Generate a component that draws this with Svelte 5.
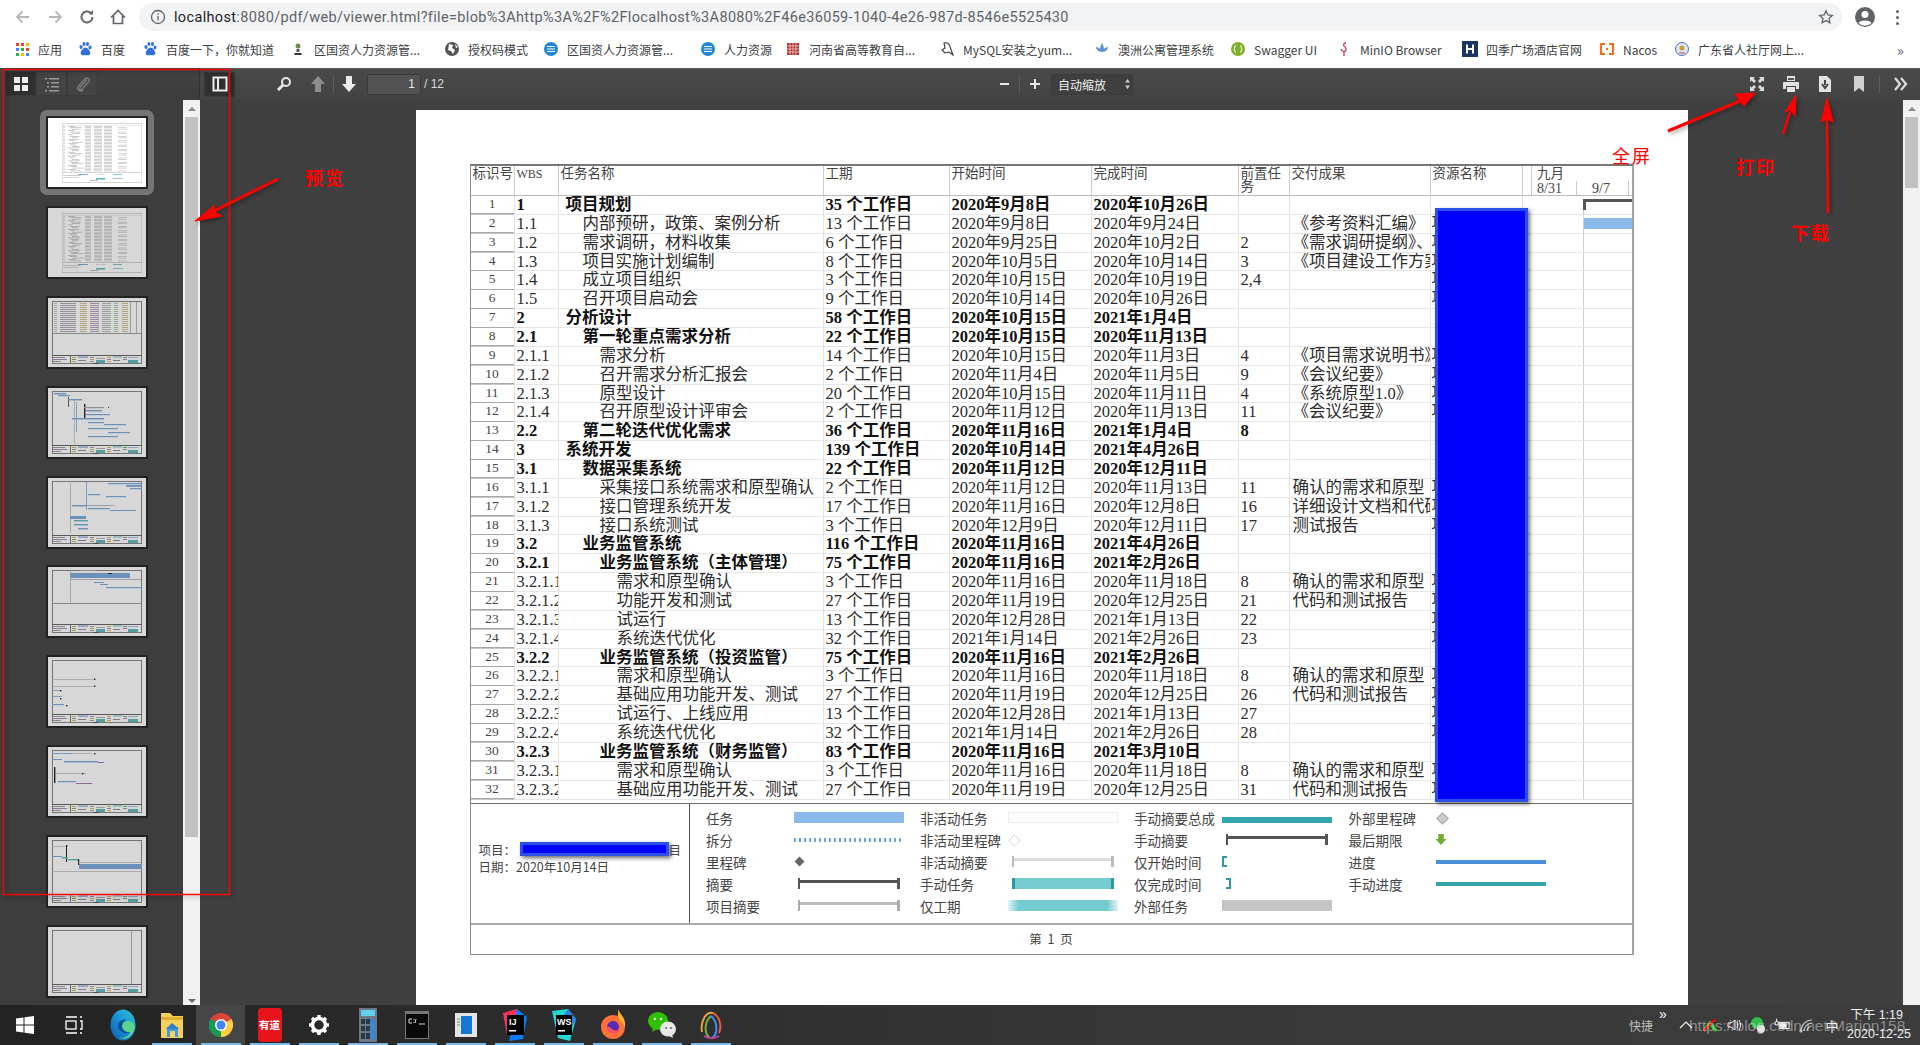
<script>
  const bookmarks = [
    ['apps','应用',63],['paw','百度',65],['paw','百度一下\uFF0C你就知道',148],['plant','区国资人力资源管...',154],
    ['globe','授权码模式',99],['ie','区国资人力资源管...',157],['ie','人力资源',85],['red','河南省高等教育自...',154],
    ['bird','MySQL安装之yum...',155],['leaf','澳洲公寓管理系统',136],['sw','Swagger UI',106],['fl','MinIO Browser',126],
    ['h','四季广场酒店官网',137],['na','Nacos',75],['gd','广东省人社厅网上...',130]
  ];
  const D = '个工作日';
  const rows = [
    [1,'1',1,'项目规划','35','2020年9月8日','2020年10月26日','','',''],
    [2,'1.1',2,'内部预研\uFF0C政策、案例分析','13','2020年9月8日','2020年9月24日','','《参考资料汇编》','项'],
    [3,'1.2',2,'需求调研\uFF0C材料收集','6','2020年9月25日','2020年10月2日','2','《需求调研提纲》、','项'],
    [4,'1.3',2,'项目实施计划编制','8','2020年10月5日','2020年10月14日','3','《项目建设工作方案','项'],
    [5,'1.4',2,'成立项目组织','3','2020年10月15日','2020年10月19日','2,4','','项'],
    [6,'1.5',2,'召开项目启动会','9','2020年10月14日','2020年10月26日','','','项'],
    [7,'2',1,'分析设计','58','2020年10月15日','2021年1月4日','','',''],
    [8,'2.1',2,'第一轮重点需求分析','22','2020年10月15日','2020年11月13日','','',''],
    [9,'2.1.1',3,'需求分析','14','2020年10月15日','2020年11月3日','4','《项目需求说明书》','项'],
    [10,'2.1.2',3,'召开需求分析汇报会','2','2020年11月4日','2020年11月5日','9','《会议纪要》','项'],
    [11,'2.1.3',3,'原型设计','20','2020年10月15日','2020年11月11日','4','《系统原型1.0》','项'],
    [12,'2.1.4',3,'召开原型设计评审会','2','2020年11月12日','2020年11月13日','11','《会议纪要》','项'],
    [13,'2.2',2,'第二轮迭代优化需求','36','2020年11月16日','2021年1月4日','8','',''],
    [14,'3',1,'系统开发','139','2020年10月14日','2021年4月26日','','',''],
    [15,'3.1',2,'数据采集系统','22','2020年11月12日','2020年12月11日','','',''],
    [16,'3.1.1',3,'采集接口系统需求和原型确认','2','2020年11月12日','2020年11月13日','11','确认的需求和原型','项'],
    [17,'3.1.2',3,'接口管理系统开发','17','2020年11月16日','2020年12月8日','16','详细设计文档和代码','项'],
    [18,'3.1.3',3,'接口系统测试','3','2020年12月9日','2020年12月11日','17','测试报告','项'],
    [19,'3.2',2,'业务监管系统','116','2020年11月16日','2021年4月26日','','',''],
    [20,'3.2.1',3,'业务监管系统\uFF08主体管理\uFF09','75','2020年11月16日','2021年2月26日','','',''],
    [21,'3.2.1.1',4,'需求和原型确认','3','2020年11月16日','2020年11月18日','8','确认的需求和原型','项'],
    [22,'3.2.1.2',4,'功能开发和测试','27','2020年11月19日','2020年12月25日','21','代码和测试报告','项'],
    [23,'3.2.1.3',4,'试运行','13','2020年12月28日','2021年1月13日','22','','项'],
    [24,'3.2.1.4',4,'系统迭代优化','32','2021年1月14日','2021年2月26日','23','','项'],
    [25,'3.2.2',3,'业务监管系统\uFF08投资监管\uFF09','75','2020年11月16日','2021年2月26日','','',''],
    [26,'3.2.2.1',4,'需求和原型确认','3','2020年11月16日','2020年11月18日','8','确认的需求和原型','项'],
    [27,'3.2.2.2',4,'基础应用功能开发、测试','27','2020年11月19日','2020年12月25日','26','代码和测试报告','项'],
    [28,'3.2.2.3',4,'试运行、上线应用','13','2020年12月28日','2021年1月13日','27','','项'],
    [29,'3.2.2.4',4,'系统迭代优化','32','2021年1月14日','2021年2月26日','28','','项'],
    [30,'3.2.3',3,'业务监管系统\uFF08财务监管\uFF09','83','2020年11月16日','2021年3月10日','','',''],
    [31,'3.2.3.1',4,'需求和原型确认','3','2020年11月16日','2020年11月18日','8','确认的需求和原型','项'],
    [32,'3.2.3.2',4,'基础应用功能开发、测试','27','2020年11月19日','2020年12月25日','31','代码和测试报告','项']
  ];
  const boldRows = new Set([1,7,8,13,14,15,19,20,25,30]);
  const legend = [
    ['任务','task'],['非活动任务','itask'],['手动摘要总成','mroll'],['外部里程碑','xmile'],
    ['拆分','split'],['非活动里程碑','imile'],['手动摘要','msum'],['最后期限','dead'],
    ['里程碑','mile'],['非活动摘要','isum'],['仅开始时间','sonly'],['进度','prog'],
    ['摘要','sum'],['手动任务','mtask'],['仅完成时间','fonly'],['手动进度','mprog'],
    ['项目摘要','psum'],['仅工期','donly'],['外部任务','xtask'],['','']
  ];

  const B = '#7ba9dc', K = '#222', G = '#aaa', T = '#5fb8bd', V = '#8a5aa0';
  function frame() {
    return [
      [4,3,90,1,'#888'],[4,3,1,63,'#888'],[93,3,1,63,'#888'],[4,57,90,1,'#666'],[4,65,90,1,'#888'],
      [5,59,12,.7,'#777'],[5,61,14,.7,V],[5,63,8,.7,'#777'],[22,57,1,8,'#777'],
      [24,59,4,.7,'#c90'],[24,61,4,.7,'#484'],[24,63,4,.7,'#c90'],[30,58.5,10,1.2,B],[30,62,8,.8,'#777'],
      [42,59,4,.7,V],[42,61,4,.7,'#c90'],[42,63,4,.7,'#777'],[48,62,9,3,T],[48,60,9,.7,'#999'],
      [59,59,4,.7,'#c90'],[59,61,4,.7,V],[59,63,4,.7,'#c90'],[65,58.5,9,.9,T],[65,62,7,.8,'#777'],
      [75,59,4,.7,'#484'],[75,61,4,.7,V],[80,62,10,3,T],[80,59,10,.7,B],[45,65,5,1,'#555']
    ];
  }
  function tablePage() {
    const r = [[14,5,80,.5,'#aaa'],[14,7,80,.4,'#ccc'],[14,54,80,.5,'#aaa'],[14,64,80,.5,'#aaa'],[14,5,.4,60,'#bbb'],[93.5,5,.4,60,'#bbb']];
    const seed = [9,14,11,8,13,10,6,12,7,14,6,13,12,8,9,15,11,8,9,15,10,10,5,9,15,10,14,11,9,15,10,14];
    seed.forEach((w, i) => {
      const y = 8 + i * 1.44;
      r.push([15,y,2,.6,'#c4c4c4'],[20 + (i%3)*2,y,w*.8,.6,'#a8a8a8'],[37,y,6,.6,'#b4b4b4'],[46,y,8,.6,'#b4b4b4'],[56,y,8,.6,'#b4b4b4']);
      if (i % 3 !== 0) r.push([70,y,9,.6,'#bbb']);
    });
    r.push([15,57,18,.6,'#aaa'],[15,59,16,.6,'#bbb'],[30,56,10,1,B],[48,56,9,.7,'#ccc'],[48,60,9,1.6,T],[65,56,9,.8,T],[65,60,10,.7,B],[42,62,8,.7,'#999']);
    return r;
  }
  const pages = [
    tablePage(),
    tablePage(),
    [...frame(),
      ...[5,7,9,11,13,15,17,19,21,23,25,27,29,31,33].flatMap((y,i)=>[[6,y,3,.6,'#999'],[12,y,16,.6,i%2?V:'#777'],[32,y,7,.6,'#ba9a40'],[42,y,9,.6,V],[54,y,9,.6,'#888'],[66,y,4,.6,'#7a7'],[74,y,6,.6,'#ba9a40']]),
      [4,35,90,.8,'#888'],[82,3,.6,32,'#888'],[88,3,.6,32,'#888']
    ],
    [...frame(),[6,5,12,1.4,B],[10,7,12,1.2,B],[20,9,.8,10,'#333'],[20,11,14,1.4,B],[28,14,.8,30,B],[36,16,1.4,14,K],[36,19,20,1.2,G],[60,19,.9,.9,K],[38,22,16,1.4,B],[38,26,24,1.2,B],[24,30,32,1.4,B],[26,12,.6,44,'#9b9'],[40,34,16,1.2,B],[56,36,22,1.2,B],[40,40,30,1.2,B],[60,44,22,1.2,B],[40,48,30,1.2,B]],
    [...frame(),[60,5,34,1.2,B],[78,7,16,1.8,B],[82,10,12,1.2,B],[22,5,.7,50,'#9b9'],[38,4,.8,28,B],[40,16,12,1.2,B],[58,18,20,1.2,B],[24,27,14,1.4,B],[38,27,28,.8,G],[40,30,22,1.2,B],[62,32,26,1,B],[22,38,16,3,B],[26,42,14,1.4,T],[26,46,14,1.4,B],[30,50,10,1.4,B]],
    [...frame(),[32,3,16,.9,G],[22,6,60,5,B],[60,6,4,1,K],[22,12,72,.8,G],[46,15,10,1,B],[52,17,8,1,B],[58,20,36,1.2,B],[22,3,.7,33,'#9b9'],[4,36,90,.8,'#888']],
    [...frame(),[4,22,42,.6,G],[46,21.5,1.4,1.4,K],[4,29,42,.6,G],[46,28.5,1.4,1.4,K],[4,33,8,.8,B],[12,33,1.4,1.4,K],[4,39,10,.8,B],[12,41,1.4,1.4,K],[4,47,12,1.2,B],[18,48,1.4,1.4,K]],
    [...frame(),[4,6,20,.9,B],[24,6,20,.6,G],[46,6,1.4,1.4,K],[4,12,10,1,B],[16,14,34,1.4,B],[50,15,6,.8,V],[6,20,1.4,12,K],[8,26,30,.6,G],[34,26,1.4,1.4,K],[6,32,1.4,4,K],[10,34,18,1.2,B],[28,36,16,.8,V]],
    [...frame(),[4,9,14,.6,G],[18,8,1.4,1.4,K],[18,9,1,16,K],[4,19,10,1,B],[14,20,6,1.6,T],[20,22,10,1.4,T],[30,22,1.2,6,K],[30,25,64,.6,G],[31,27,63,5,B],[4,34,90,.6,G]],
    [...frame(),[83,3,.9,54,'#aaa']]
  ];
  const thumbs = pages.map((rects, i) => ({ rects, sel: i === 0 }));
  const tbIcons = ['win','tv','edge','folder','chrome','yd','gear','calc','cmd','wnd','ij','ws','ff','wx','pm'];
</script>

{#snippet fav(k)}
  <svg class="fav" viewBox="0 0 16 16">
    {#if k==='apps'}
      {#each [[2,'#ea4335'],[7,'#ea4335'],[12,'#fbbc04']] as c,i}<rect x={c[0]} y="2" width="3" height="3" fill={c[1]}/>{/each}
      {#each [2,7,12] as x,i}<rect x={x} y="7" width="3" height="3" fill={['#4285f4','#34a853','#ea4335'][i]}/>{/each}
      {#each [2,7,12] as x,i}<rect x={x} y="12" width="3" height="3" fill={['#34a853','#fbbc04','#4285f4'][i]}/>{/each}
    {:else if k==='paw'}
      <g fill="#2f6fe0"><ellipse cx="4" cy="6" rx="1.6" ry="2"/><ellipse cx="7" cy="3" rx="1.5" ry="2"/><ellipse cx="10.5" cy="3" rx="1.5" ry="2"/><ellipse cx="13" cy="6.5" rx="1.5" ry="2"/><path d="M8.5 6.5c-2 0-4.800 3.500-4.800 5.800 0 2 2 2.500 4.800 1.700 2.800.8 4.800.3 4.800-1.700 0-2.300-2.800-5.800-4.800-5.800z"/></g>
    {:else if k==='plant'}
      <circle cx="8" cy="5" r="2.500" fill="#6f8f4f"/><rect x="6.500" y="8" width="3" height="3" fill="#555"/><rect x="4.500" y="12" width="7" height="2" fill="#333"/>
    {:else if k==='globe'}
      <circle cx="8" cy="8" r="7" fill="#555"/><path d="M5 3l4 1-1 3 3 2-2 4-2-3-3-1z M11 3l3 3-2 1z" fill="#fff"/>
    {:else if k==='ie'}
      <circle cx="8" cy="8" r="7" fill="#1f86d8"/><path d="M4 5.500h8M4 8h8M4 10.500h8" stroke="#fff" stroke-width="1.200"/>
    {:else if k==='red'}
      <rect x="2" y="2" width="12" height="12" fill="#b03030"/><path d="M2 5h12M2 8h12M2 11h12M5 2v12M8 2v12M11 2v12" stroke="#f2caca" stroke-width=".8"/>
    {:else if k==='bird'}
      <path d="M5 2c3-1 6 1 6 4l3 8-4-3-4 1-3-3 3-2z" fill="none" stroke="#333" stroke-width="1.100"/>
    {:else if k==='leaf'}
      <path d="M8 14V6M8 11C4 11 2 8 2 6c2 0 3 1 4 2 0-2 1-4 2-6 1 2 2 4 2 6 1-1 2-2 4-2 0 2-2 5-6 5z" fill="#5b93cf"/>
    {:else if k==='sw'}
      <circle cx="8" cy="8" r="7" fill="#7fb02a"/><path d="M6 4.500c-2 0-1 3-2 3.500 1 .5 0 3.500 2 3.500M10 4.500c2 0 1 3 2 3.500-1 .5 0 3.500-2 3.500" fill="none" stroke="#fff" stroke-width="1"/>
    {:else if k==='fl'}
      <path d="M10 2C7 2 7 5 9 6c2 1 1 4-1 5v4M8 11c-2-1-3-2-3-3" fill="none" stroke="#d0304f" stroke-width="1.300"/>
    {:else if k==='h'}
      <rect x="0" y="0" width="16" height="16" fill="#1c3560"/><path d="M5 3.500v9M11 3.500v9M5 8h6" stroke="#fff" stroke-width="2"/>
    {:else if k==='na'}
      <path d="M6 3H2v10h4M10 3h4v10h-4" fill="none" stroke="#f0701a" stroke-width="2.200"/><rect x="7" y="7" width="2" height="2" fill="#f0701a"/>
    {:else}
      <circle cx="8" cy="8" r="6.500" fill="#dfe6f5" stroke="#4a6fbf"/><circle cx="8" cy="7" r="2.500" fill="#c9a030"/><path d="M5 12h6" stroke="#c04040"/>
    {/if}
  </svg>
{/snippet}

{#snippet tbicon(k)}
  {#if k==='win'}
    <svg width="20" height="20" viewBox="0 0 20 20" fill="#fff"><path d="M1 3.500l7.500-1.100v7H1zM9.500 2.200L19 1v8.400H9.500zM1 10.500h7.500v7L1 16.400zM9.500 10.500H19V19l-9.500-1.300z"/></svg>
  {:else if k==='tv'}
    <svg width="20" height="20" viewBox="0 0 20 20" fill="none" stroke="#fff" stroke-width="1.300"><path d="M2 2h11M2 18h11"/><rect x="2" y="6" width="10" height="8"/><path d="M16 2h2M16 6h2v8h-2M16 18h2"/></svg>
  {:else if k==='edge'}
    <svg width="26" height="32" viewBox="0 0 26 32"><defs><linearGradient id="eg" x1="0" y1="1" x2="1" y2="0"><stop offset="0" stop-color="#0c59a4"/><stop offset=".6" stop-color="#1b9de2"/><stop offset="1" stop-color="#35c1b0"/></linearGradient></defs><ellipse cx="13" cy="16" rx="12.500" ry="15.500" fill="url(#eg)"/><path d="M25 19c0-5-4-7-7-7-4 0-6 2-6 5 0 5 5 7 9 6-3 5-8 7-12 5 4 3 12 3 16-9z" fill="#58d58a"/><path d="M12 17c0 4 4 7 9 6-6 3-13 0-13-7 0-3 4-6 9-5-3 1-5 3-5 6z" fill="#0a4f96"/></svg>
  {:else if k==='folder'}
    <svg width="24" height="30" viewBox="0 0 24 30"><path d="M1 3h9l3 3h10v22H1z" fill="#f3cf5d"/><path d="M1 7h22v3H1z" fill="#e3ae2e"/><rect x="7" y="17" width="11" height="10" fill="#3f9be6"/><path d="M12 13l7 6H6z" fill="#2e7fc7"/><rect x="10" y="21" width="5" height="6" fill="#f3cf5d"/></svg>
  {:else if k==='chrome'}
    <svg width="24" height="32" viewBox="0 0 24 32"><circle cx="12" cy="16" r="12" fill="#db4437"/><path d="M12 16L1.500 10A12 12 0 0 0 12 28z" fill="#0f9d58"/><path d="M12 16v12a12 12 0 0 0 10.400-18z" fill="#ffcd40"/><circle cx="12" cy="16" r="6" fill="#fff"/><circle cx="12" cy="16" r="4.500" fill="#4285f4"/></svg>
  {:else if k==='yd'}
    <span class="yd">有道</span>
  {:else if k==='gear'}
    <svg width="22" height="22" viewBox="0 0 22 22"><circle cx="11" cy="11" r="6.500" fill="none" stroke="#fff" stroke-width="3.500"/><g stroke="#fff" stroke-width="3.400"><path d="M11 1v3M11 18v3M1 11h3M18 11h3M4 4l2 2M16 16l2 2M18 4l-2 2M4 18l2-2"/></g></svg>
  {:else if k==='calc'}
    <svg width="18" height="34" viewBox="0 0 18 34"><rect width="18" height="34" rx="1" fill="#6c7a88"/><rect x="2" y="2" width="14" height="6" fill="#5fd0ec"/><g fill="#25384d"><rect x="2" y="11" width="4" height="5"/><rect x="7" y="11" width="4" height="5"/><rect x="2" y="18" width="4" height="5"/><rect x="7" y="18" width="4" height="5"/><rect x="2" y="25" width="4" height="6"/><rect x="7" y="25" width="4" height="6"/></g><rect x="12" y="11" width="4" height="20" fill="#2e8be0"/></svg>
  {:else if k==='cmd'}
    <svg width="24" height="28" viewBox="0 0 24 28"><rect width="24" height="28" fill="#777"/><rect x="1" y="3" width="22" height="24" fill="#0a0a0a"/><path d="M4 8h3M4 12h3M4 8v4M9 8v1M9 11v1M11 8l-1 4M14 13h6" stroke="#ddd" fill="none"/></svg>
  {:else if k==='wnd'}
    <svg width="22" height="24" viewBox="0 0 22 24"><rect width="22" height="24" fill="#e4e4e4"/><rect x="6" y="3" width="11" height="18" fill="#1477d4"/><path d="M2 6h3M2 9h3M2 12h3" stroke="#888"/></svg>
  {:else if k==='ij'}
    <svg width="24" height="32" viewBox="0 0 24 32"><path d="M0 4L14 0l2 8-12 18z" fill="#fe315d"/><path d="M14 0l10 8-4 22-14 2z" fill="#087cfa"/><rect x="4" y="6" width="17" height="20" fill="#000"/><text x="6" y="16" class="mini">IJ</text><rect x="6" y="21" width="7" height="1.500" fill="#fff"/></svg>
  {:else if k==='ws'}
    <svg width="24" height="32" viewBox="0 0 24 32"><path d="M0 2l16-2 8 10-6 22-12-3z" fill="#22d8d0"/><path d="M16 0l8 10-4 8-8-12z" fill="#2a7fe8"/><rect x="4" y="6" width="16" height="20" fill="#000"/><text x="5" y="16" class="mini">WS</text><rect x="6" y="21" width="7" height="1.500" fill="#fff"/></svg>
  {:else if k==='ff'}
    <svg width="26" height="32" viewBox="0 0 26 32"><circle cx="13" cy="18" r="12" fill="#ff7139"/><path d="M18 0c2 6 8 8 7 18-2-5-7-6-7-12z" fill="#ffb02e"/><circle cx="13" cy="18" r="6" fill="#5b2ab0"/><path d="M7 18c0 6 8 9 13 3-3 1-8 1-10-3z" fill="#ff4f5e"/></svg>
  {:else if k==='wx'}
    <svg width="28" height="30" viewBox="0 0 28 30"><ellipse cx="10" cy="11" rx="10" ry="9" fill="#2dc100"/><path d="M5 17l-1 5 5-3z" fill="#2dc100"/><ellipse cx="20" cy="19" rx="8" ry="7.500" fill="#e8e8e8"/><path d="M24 24l1 4-4-2z" fill="#e8e8e8"/><circle cx="7" cy="9" r="1.200" fill="#fff"/><circle cx="13" cy="9" r="1.200" fill="#fff"/><circle cx="18" cy="18" r="1" fill="#666"/><circle cx="23" cy="18" r="1" fill="#666"/></svg>
  {:else}
    <svg width="24" height="30" viewBox="0 0 24 30" fill="none" stroke-width="2"><path d="M3 22C1 10 8 1 14 3" stroke="#e8a33d"/><path d="M14 3c7 3 9 14 6 20" stroke="#e85d3d"/><path d="M12 6C5 12 5 24 11 28" stroke="#6fb43f"/><path d="M12 6c7 6 7 18 1 22" stroke="#3f8fe8"/><path d="M5 26c5 3 10 3 15 0" stroke="#c03fa0"/></svg>
  {/if}
{/snippet}

<div class="screen">
  <header class="chrome">
    <div class="nav">
      <svg class="nicon" viewBox="0 0 18 18" fill="none" stroke="#b4b7bb" stroke-width="1.800"><path d="M15 9H3M8.500 3.500L3 9l5.500 5.500"/></svg>
      <svg class="nicon" viewBox="0 0 18 18" fill="none" stroke="#b4b7bb" stroke-width="1.800"><path d="M3 9h12M9.500 3.500L15 9l-5.500 5.500"/></svg>
      <svg class="nicon" viewBox="0 0 18 18" fill="none" stroke="#5f6368" stroke-width="1.900"><path d="M14.500 9a5.500 5.500 0 1 1-1.700-4"/><path d="M15 2v4.500h-4.500" fill="#5f6368" stroke="none"/></svg>
      <svg class="nicon" viewBox="0 0 18 18" fill="none" stroke="#5f6368" stroke-width="1.700"><path d="M2 9.500L9 2.500l7 7M4.500 8v7.500h9V8"/></svg>
      <div class="omni">
        <svg class="info" viewBox="0 0 16 16" fill="none" stroke="#5f6368" stroke-width="1.300"><circle cx="8" cy="8" r="6.500"/><path d="M8 7v4.500M8 4.300v1.400"/></svg>
        <span class="url"><b>localhost</b>:8080/pdf/web/viewer.html?file=blob%3Ahttp%3A%2F%2Flocalhost%3A8080%2F46e36059-1040-4e26-987d-8546e5525430</span>
        <svg class="star" viewBox="0 0 16 16" fill="none" stroke="#5f6368" stroke-width="1.300"><path d="M8 1.800l1.900 4.100 4.400.5-3.300 3 .9 4.400L8 11.600l-3.900 2.200.9-4.400-3.300-3 4.400-.5z"/></svg>
      </div>
      <svg class="avatar" viewBox="0 0 20 20"><circle cx="10" cy="10" r="10" fill="#5f6368"/><circle cx="10" cy="7.500" r="3.500" fill="#fff"/><path d="M3.500 16c1-3.500 12-3.500 13 0a9 9 0 0 1-13 0z" fill="#fff"/></svg>
      <span class="dots"><i></i><i></i><i></i></span>
    </div>
    <div class="bar">
      {#each bookmarks as b}
        <div class="bm">{@render fav(b[0])}<span>{b[1]}</span></div>
      {/each}
      <span class="more">»</span>
    </div>
  </header>

  <div class="toolbar">
    <div class="tb-side">
      <div class="seg">
        <span class="tb on"><svg width="16" height="16" viewBox="0 0 16 16" fill="#eee"><rect x="1" y="1" width="6" height="6"/><rect x="9" y="1" width="6" height="6"/><rect x="1" y="9" width="6" height="6"/><rect x="9" y="9" width="6" height="6"/></svg></span>
        <span class="tb"><svg width="16" height="16" viewBox="0 0 16 16" fill="#9a9a9a"><rect x="1" y="2" width="2" height="1.500"/><rect x="5" y="2" width="10" height="1.500"/><rect x="3" y="6" width="2" height="1.500"/><rect x="7" y="6" width="8" height="1.500"/><rect x="3" y="10" width="2" height="1.500"/><rect x="7" y="10" width="8" height="1.500"/><rect x="1" y="14" width="2" height="1.500"/><rect x="5" y="14" width="10" height="1.500"/></svg></span>
        <span class="tb"><svg width="16" height="16" viewBox="0 0 16 16" fill="none" stroke="#7d7d7d" stroke-width="1.300"><path d="M12 3.500L5 11.500c-1 1.300 1 3 2.200 1.700L13.500 6c2-2.500-1.500-5.500-3.700-3L3.500 10c-2.500 3 2 7 4.700 4"/></svg></span>
      </div>
    </div>
    <div class="tb-main">
      <span class="tb toggle"><svg width="16" height="16" viewBox="0 0 16 16" fill="none" stroke="#eee" stroke-width="2"><rect x="1.500" y="1.500" width="13" height="13"/><path d="M6 1v14"/></svg></span>
      <span class="ib search"><svg width="16" height="16" viewBox="0 0 16 16" fill="none" stroke="#e8e8e8"><circle cx="10" cy="6" r="4" stroke-width="2"/><path d="M7 9l-5 5" stroke-width="3"/></svg></span>
      <span class="ib up"><svg width="18" height="18" viewBox="0 0 18 18" fill="#8d8d8d"><path d="M9 1l7 8h-4v8H6V9H2z"/></svg></span>
      <i class="sep"></i>
      <span class="ib down"><svg width="18" height="18" viewBox="0 0 18 18" fill="#ececec"><path d="M9 17l7-8h-4V1H6v8H2z"/></svg></span>
      <span class="pageinput">1</span>
      <span class="total">/ 12</span>
      <span class="ib minus"><b class="mn"></b></span>
      <i class="sep"></i>
      <span class="ib"><b class="pl"></b></span>
      <span class="select">自动缩放<svg width="7" height="12" viewBox="0 0 7 12" fill="#ccc"><path d="M3.500 1L6 4.500H1zM3.500 11L1 7.500h5z"/></svg></span>
      <div class="tb-right">
        <span class="ib"><svg width="16" height="16" viewBox="0 0 16 16" fill="#ddd"><path d="M1 1h5L4.500 2.500l2.500 2.500-2 2-2.500-2.500L1 6zM15 1v5l-1.500-1.500L11 7 9 5l2.500-2.500L10 1zM1 15v-5l1.500 1.500L5 9l2 2-2.500 2.500L6 15zM15 15h-5l1.500-1.500L9 11l2-2 2.500 2.500L15 10z"/></svg></span>
        <span class="ib"><svg width="18" height="18" viewBox="0 0 18 18" fill="#e2e2e2"><path d="M5 1h8v5H5z"/><path d="M2 7h14a1 1 0 0 1 1 1v6h-3v-3H4v3H1V8a1 1 0 0 1 1-1z"/><rect x="5" y="12" width="8" height="5"/><rect x="6" y="3" width="6" height="2" fill="#555"/></svg></span>
        <span class="ib"><svg width="16" height="18" viewBox="0 0 16 18" fill="#e2e2e2"><path d="M2 1h8l4 4v12H2z"/><path d="M8 5v5M5 9l3 4 3-4" stroke="#444" stroke-width="2" fill="none"/></svg></span>
        <span class="ib"><svg width="12" height="18" viewBox="0 0 12 18" fill="#d0d0d0"><path d="M1 1h10v16l-5-4-5 4z"/></svg></span>
        <i class="sep rsep"></i>
        <span class="ib"><svg width="16" height="16" viewBox="0 0 16 16" fill="none" stroke="#ddd" stroke-width="2.200"><path d="M3 2l5 6-5 6M9 2l5 6-5 6"/></svg></span>
      </div>
    </div>
  </div>

  <div class="body">
    <aside class="sidebar">
      <div class="thumbs">
        {#each thumbs as t}
          <div class="thumbwrap" class:sel={t.sel}>
            <svg class="thumb" viewBox="0 0 98 69" preserveAspectRatio="none">
              <rect width="98" height="69" fill="#fff"/>
              {#each t.rects as r}<rect x={r[0]} y={r[1]} width={r[2]} height={r[3]} fill={r[4]}/>{/each}
            </svg>
          </div>
        {/each}
      </div>
      <div class="scroll">
        <span class="ar-up"></span>
        <div class="sthumb side"></div>
        <span class="ar-down"></span>
      </div>
    </aside>

    <main class="viewer">
      <div class="page">
        <div class="table">
          <div class="row head">
            <div class="c c-id">标识号</div>
            <div class="c wbs-h">WBS</div>
            <div class="c">任务名称</div>
            <div class="c">工期</div>
            <div class="c">开始时间</div>
            <div class="c">完成时间</div>
            <div class="c pred-h">前置任务</div>
            <div class="c">交付成果</div>
            <div class="c">资源名称</div>
            <div class="c gh">
              <div class="gh-m">九月</div>
              <div class="gh-w"><span>8/31</span><span>9/7</span></div>
            </div>
          </div>
          {#each rows as r}
            <div class="row" class:bold={boldRows.has(r[0])}>
              <div class="c idc">{r[0]}</div>
              <div class="c">{r[1]}</div>
              <div class="c lv{r[2]}">{r[3]}</div>
              <div class="c">{r[4]} {D}</div>
              <div class="c">{r[5]}</div>
              <div class="c">{r[6]}</div>
              <div class="c">{r[7]}</div>
              <div class="c dv">{r[8]}</div>
              <div class="c res">{r[9]}</div>
              <div class="c gc">
                <div class="gline">
                  {#if r[0]===1}<span class="g-sum"></span>{/if}
                  {#if r[0]===2}<span class="g-bar"></span>{/if}
                </div>
              </div>
            </div>
          {/each}
          <div class="endline"></div>
          <div class="legend">
            <div class="proj">
              <div class="pl1"><span>项目&#xFF1A;</span><span class="pblue"></span><span>目</span></div>
              <div>日期&#xFF1A;2020年10月14日</div>
            </div>
            <div class="lg">
              {#each legend as l}
                <span class="lt">{l[0]}</span>
                <span class="sw {l[1]}"></span>
              {/each}
            </div>
          </div>
          <div class="foot">第 1 页</div>
          <div class="redact"></div>
        </div>
      </div>
    </main>

    <div class="scroll main">
      <span class="ar-up"></span>
      <div class="sthumb mainthumb"></div>
    </div>
  </div>

  <footer class="taskbar">
    {#each tbIcons as k, i}
      <div class="tk" class:active={k==='chrome'} class:run={i>=3}>{@render tbicon(k)}</div>
    {/each}
    <div class="tray">
      <span class="kj">快捷</span>
      <span class="kjm">»</span>
      <svg class="ti" viewBox="0 0 16 16" fill="none" stroke="#eee" stroke-width="1.200"><path d="M2 11l6-6 6 6"/></svg>
      <svg class="ti" viewBox="0 0 16 16" fill="none"><path d="M2 14L8 6l6 8" stroke="#2dd02d" stroke-width="3"/><path d="M2 14L13 2" stroke="#f00" stroke-width="2"/></svg>
      <svg class="ti" viewBox="0 0 16 16" fill="none" stroke="#eee"><path d="M2 6h3l4-3v10l-4-3H2zM11 5c1 2 1 4 0 6M13 3c2 3 2 7 0 10"/></svg>
      <svg class="ti" viewBox="0 0 16 16"><circle cx="7" cy="6" r="6" fill="#2dc14a"/><circle cx="11" cy="12" r="4" fill="#ddd"/></svg>
      <svg class="ti" viewBox="0 0 18 16" fill="none" stroke="#eee" stroke-width="1.200"><rect x="6" y="5" width="11" height="7"/><rect x="7.500" y="6.500" width="6" height="4" fill="#eee"/><circle cx="3" cy="6" r="2"/><path d="M3 1v3"/></svg>
      <svg class="ti" viewBox="0 0 16 16" fill="none" stroke="#bbb" stroke-width="1.200"><path d="M3 14a11 11 0 0 1 11-11M6 14a8 8 0 0 1 8-8M9 14a5 5 0 0 1 5-5"/><circle cx="3" cy="14" r="1" fill="#eee"/></svg>
      <span class="zh">中</span>
      <div class="clock"><span>下午 1:19</span><span>2020-12-25</span></div>
    </div>
    <div class="watermark">https://blog.csdn.net/Marion158</div>
  </footer>

  <div class="notes">
    <svg width="1920" height="1045" viewBox="0 0 1920 1045">
      <rect x="3.500" y="69.500" width="226" height="825" fill="none" stroke="#f00" stroke-width="1.400"/>
      <g fill="#f00" stroke="#f00">
        <path d="M278 179L208 214" stroke-width="3"/><path d="M195 221L215 205 213 211 222 216z"/>
        <path d="M1668 131L1740 101" stroke-width="3"/><path d="M1755 93L1735 94 1739 100 1744 106z"/>
        <path d="M1783 134L1790 112" stroke-width="2.500"/><path d="M1796 95L1785 112 1790 110 1795 116z"/>
        <path d="M1828 213L1827 120" stroke-width="2.500"/><path d="M1827 98L1821 122 1827 119 1833 122z"/>
      </g>
    </svg>
    <span class="nt n1">预览</span>
    <span class="nt n2">全屏</span>
    <span class="nt n3">打印</span>
    <span class="nt n4">下载</span>
  </div>
</div>

<style>
  :global(body) { margin: 0; overflow: hidden; }
  .screen { position: relative; width: 1920px; height: 1045px; display: flex; flex-direction: column; overflow: hidden; background: #404040; font-family: "Noto Sans CJK SC", sans-serif; }

  .chrome { height: 68px; flex: none; background: #fff; box-sizing: border-box; }
  .nav { height: 34px; display: flex; align-items: center; padding-left: 14px; box-sizing: border-box; }
  .nicon { width: 18px; height: 18px; margin-right: 14px; flex: none; }
  .nav .nicon:nth-child(3) { margin-right: 13px; }
  .omni { width: 1703px; height: 28px; margin-left: -2px; background: #f1f3f4; border-radius: 14px; display: flex; align-items: center; flex: none; padding: 0 8px 0 11px; box-sizing: border-box; }
  .info { width: 16px; height: 16px; flex: none; }
  .url { font: 14.500px Roboto, sans-serif; color: #5f6368; margin-left: 8px; flex: 1; letter-spacing: .34px; white-space: nowrap; }
  .url b { font-weight: 400; color: #202124; }
  .star { width: 16px; height: 16px; flex: none; }
  .avatar { width: 20px; height: 20px; margin-left: 13px; flex: none; }
  .dots { display: flex; flex-direction: column; gap: 3px; margin-left: 21px; }
  .dots i { width: 3px; height: 3px; border-radius: 50%; background: #5f6368; }

  .bar { height: 34px; display: grid; grid-template-columns: 63px 65px 148px 154px 99px 157px 85px 154px 155px 136px 106px 126px 137px 75px 130px 1fr; align-items: center; padding: 0 16px 4px 14px; box-sizing: border-box; }
  .bm { display: flex; align-items: center; gap: 7px; font-size: 12px; color: #3c4043; white-space: nowrap; }
  .bm span { padding-left: 1px; }
  .fav { width: 16px; height: 16px; flex: none; }
  .more { font-size: 15px; color: #5f6368; justify-self: end; }

  .toolbar { height: 32px; flex: none; display: flex; background: linear-gradient(#4a4a4a, #434343); box-shadow: inset 0 1px 0 #5a5a5a; position: relative; z-index: 1; }
  .tb-side { width: 200px; box-sizing: border-box; padding: 3px 0 0 5px; border-right: 1px solid #333; background: linear-gradient(#444, #3c3c3c); flex: none; }
  .seg { display: flex; }
  .tb { width: 31px; height: 25px; display: flex; align-items: center; justify-content: center; background: #444; box-shadow: inset 0 0 0 1px #3a3a3a; }
  .tb.on { background: #2f2f2f; }
  .tb-main { flex: 1; display: flex; align-items: center; padding-left: 4px; }
  .tb.toggle { background: #303030; border-radius: 2px; }
  .ib { width: 28px; height: 24px; display: flex; align-items: center; justify-content: center; flex: none; }
  .search { margin-left: 35px; }
  .up { margin-left: 6px; }
  .sep { width: 1px; height: 18px; background: #5e5e5e; flex: none; margin: 0 1px; }
  .sep.rsep { margin: 0; }
  .pageinput { width: 54px; height: 21px; margin-left: 4px; box-sizing: border-box; padding-right: 5px; text-align: right; background: #525252; border: 1px solid #3a3a3a; border-radius: 2px; color: #e8e8e8; font: 12px/19px "Liberation Sans", sans-serif; flex: none; }
  .total { color: #d9d9d9; font: 12px "Liberation Sans", sans-serif; margin-left: 3px; width: 20px; }
  .minus { margin-left: 546px; }
  .mn { width: 9px; height: 2px; background: #e6e6e6; display: block; }
  .pl { width: 10px; height: 10px; display: block; background: linear-gradient(#e6e6e6, #e6e6e6) center / 10px 2px no-repeat, linear-gradient(#e6e6e6, #e6e6e6) center / 2px 10px no-repeat; }
  .select { width: 82px; height: 21px; margin-left: 2px; box-sizing: border-box; padding: 0 1px 0 6px; display: flex; align-items: center; justify-content: space-between; background: #3f3f3f; border: 1px solid #3a3a3a; border-radius: 2px; color: #eee; font-size: 12px; flex: none; }
  .tb-right { margin-left: auto; display: flex; align-items: center; gap: 6px; padding-right: 6px; }

  .body { flex: 1; display: flex; min-height: 0; }
  .sidebar { width: 200px; flex: none; display: flex; background: #3d3d3d; box-sizing: border-box; overflow: hidden; }
  .thumbs { width: 183px; flex: none; padding-top: 16px; display: flex; flex-direction: column; gap: 16.900px; align-items: flex-start; padding-left: 46px; box-sizing: border-box; }
  .thumbwrap { width: 102px; height: 73px; flex: none; box-sizing: border-box; background: #222; padding: 2px; position: relative; }
  .thumbwrap.sel { outline: 6px solid #757575; border-radius: 1px; }
  .thumb { display: block; width: 98px; height: 69px; opacity: .82; }
  .sel .thumb { opacity: 1; }
  .scroll { width: 17px; flex: none; background: #f1f1f1; display: flex; flex-direction: column; align-items: center; box-sizing: border-box; padding-top: 7px; }
  .scroll.main { width: 17px; }
  .ar-up { width: 0; height: 0; border: 4px solid transparent; border-top: 0; border-bottom: 4px solid #8a8a8a; flex: none; }
  .ar-down { width: 0; height: 0; border: 4px solid transparent; border-bottom: 0; border-top: 4px solid #666; margin-top: auto; margin-bottom: 2px; flex: none; }
  .sthumb { width: 13px; background: #c1c1c1; margin-top: 6px; flex: none; }
  .sthumb.side { height: 720px; }
  .sthumb.mainthumb { height: 71px; }

  .viewer { flex: 1; min-width: 0; background: #404040; overflow: hidden; padding-top: 10px; box-sizing: border-box; display: flex; justify-content: center; }
  .page { width: 1272px; background: #fff; flex: none; height: 900px; box-sizing: border-box; padding: 54px 54px 0; }

  .table { position: relative; width: 1164px; box-sizing: border-box; border-left: 1px solid #8a8a8a; border-right: 2px solid #a2a2a2; border-top: 2px solid #777; border-bottom: 1.500px solid #8a8a8a; font-family: "Liberation Serif", "Noto Sans CJK SC", serif; color: #2c2c2c; }
  .row { display: grid; grid-template-columns: 44px 44px 265px 126px 142px 147px 51px 141px 92.500px 1fr; height: 18.870px; font-size: 16.500px; line-height: 18.500px; box-sizing: border-box; border-bottom: 1px solid #e6e6e6; }
  .row.bold { font-weight: 700; color: #111; }
  .row.head { height: 30px; font-size: 13.500px; line-height: 14px; font-weight: 400; color: #444; border-bottom: 1.500px solid #bbb; }
  .c { overflow: hidden; white-space: nowrap; box-sizing: border-box; padding-left: 2px; border-right: 1px solid #e2e2e2; min-width: 0; }
  .head .c { padding-top: 1px; white-space: normal; border-right: 1px solid #ccc; }
  .wbs-h { font-size: 12px; }
  .pred-h { word-break: break-all; line-height: 13px; }
  .idc { text-align: center; font-size: 13.500px; font-weight: 400; padding: 0; line-height: 16px; background: linear-gradient(#a8a8a8, #a8a8a8) bottom / 100% 1.500px no-repeat; margin-bottom: -1px; color: #444; }
  .lv1 { padding-left: 7px; }
  .lv2 { padding-left: 24px; }
  .lv3 { padding-left: 41px; }
  .lv4 { padding-left: 58px; }
  .dv { padding-left: 3px; font-weight: 400; }
  .res { padding-left: 1px; font-weight: 400; }
  .gh { padding: 0; margin-left: 8px; border-left: 1px solid #ccc; border-right: 0; }
  .head .gh { border-right: 0; padding: 1px 0 0 5px; }
  .gh-m { height: 14px; }
  .gh-w { display: flex; height: 15px; margin: 0 0 0 -5px; font-size: 14px; line-height: 15px; }
  .gh-w span { width: 45px; padding-left: 5px; box-sizing: border-box; border-right: 1px solid #ccc; }
  .gh-w span:last-child { width: 52px; padding-left: 15px; margin-right: 0; }
  .gc { padding: 0 0 0 60px; border-right: 0; overflow: visible; }
  .gline { height: 100%; border-left: 1px solid #cfcfcf; margin-bottom: -1px; position: relative; }
  .g-sum { display: block; height: 3px; margin-top: 3px; background: #555; position: relative; }
  .g-sum::before { content: ""; position: absolute; left: -1px; top: 0; width: 3px; height: 11px; background: #555; }
  .g-bar { display: block; height: 11px; margin-top: 3px; background: #8bbaea; }
  .endline { height: 3px; border-bottom: 1.500px solid #6e6e6e; }
  .redact { position: absolute; left: 964px; top: 42px; width: 93px; height: 594px; box-sizing: border-box; background: #00f; border: 3px solid #2b50e8; box-shadow: 2px 2px 4px rgba(0,0,0,.55); }

  .legend { display: flex; height: 119px; border-bottom: 2px solid #aaa; font-family: "Noto Sans CJK SC", sans-serif; font-size: 13.500px; color: #444; }
  .proj { width: 219px; flex: none; border-right: 1px solid #555; box-sizing: border-box; padding: 37px 0 0 8px; font-size: 12.500px; line-height: 17px; }
  .pl1 { display: flex; align-items: center; height: 17px; }
  .pl1 span:first-child { width: 41px; }
  .pblue { width: 149px; height: 14px; box-sizing: border-box; background: #00f; border: 3px solid #2b50e8; box-shadow: 2px 2px 4px rgba(0,0,0,.6); flex: none; }
  .lg { flex: 1; display: grid; grid-template-columns: 87.500px 126.500px 87.500px 126.500px 87.500px 127px 87px 110px; grid-auto-rows: 22px; align-items: center; padding: 3px 0 0 16.500px; box-sizing: border-box; align-content: start; white-space: nowrap; }
  .lt { line-height: 22px; }
  .sw { display: block; height: 11px; width: 110px; position: relative; box-sizing: border-box; }
  .task { background: #8bbaea; }
  .itask { border: 1px solid #ececec; }
  .mroll { background: linear-gradient(#32a5ad, #32a5ad) 0 5px / 100% 6px no-repeat; }
  .xmile::before, .mile::before, .imile::before { content: ""; position: absolute; left: 2px; top: 2px; width: 7px; height: 7px; transform: rotate(45deg); }
  .xmile::before { background: #ccc; border: 1px solid #aaa; }
  .mile::before { background: #666; }
  .imile::before { background: #fff; border: 1px solid #ddd; }
  .split { background: repeating-linear-gradient(90deg, #6aa5e0 0 2px, transparent 2px 5px) 0 4px / 100% 4px no-repeat; }
  .msum, .sum, .psum, .isum { width: 102px; margin-left: 4px; }
  .msum, .sum { background: linear-gradient(#555, #555) 0 2px / 100% 3px no-repeat; }
  .psum { background: linear-gradient(#bbb, #bbb) 0 2px / 100% 3px no-repeat; }
  .isum { background: linear-gradient(#ddd, #ddd) 0 2px / 100% 3px no-repeat; }
  .msum::before, .msum::after, .sum::before, .sum::after, .psum::before, .psum::after, .isum::before, .isum::after { content: ""; position: absolute; top: 0; width: 2.500px; height: 11px; background: #555; }
  .psum::before, .psum::after { background: #aaa; }
  .isum::before, .isum::after { background: #bbb; }
  .msum::after, .sum::after, .psum::after, .isum::after { right: 0; }
  .dead::before { content: ""; position: absolute; left: 0; top: 0; width: 11px; height: 11px; background: #6fae2e; clip-path: polygon(25% 0, 75% 0, 75% 45%, 100% 45%, 50% 100%, 0 45%, 25% 45%); }
  .mtask { width: 102px; margin-left: 4px; background: linear-gradient(90deg, #2b9aa0 0 3px, #74cbd0 3px calc(100% - 3px), #2b9aa0 calc(100% - 3px)); }
  .donly { background: linear-gradient(90deg, #e2f4f5, #74cbd0 10%, #74cbd0 90%, #e2f4f5); }
  .sonly::before { content: ""; position: absolute; left: 0; top: 0; width: 5px; height: 11px; box-sizing: border-box; border: 2.500px solid #2b9aa0; border-right: 0; }
  .fonly::before { content: ""; position: absolute; left: 4px; top: 0; width: 5px; height: 11px; box-sizing: border-box; border: 2.500px solid #2b9aa0; border-left: 0; }
  .prog { background: linear-gradient(#4a8fdc, #4a8fdc) 0 4px / 100% 4px no-repeat; }
  .mprog { background: linear-gradient(#32a5ad, #32a5ad) 0 4px / 100% 4px no-repeat; }
  .xtask { background: #c4c4c4; }
  .foot { height: 29.500px; font: 12.500px/28px "Noto Sans CJK SC", sans-serif; color: #444; text-align: center; white-space: pre; word-spacing: 3px; }

  .taskbar { height: 40px; flex: none; position: relative; z-index: 1; display: flex; background: linear-gradient(90deg, #232323, #2d2d2d 30%, #3a3a3a 70%, #3c3c3c); }
  .tk { width: 49px; height: 40px; display: flex; align-items: center; justify-content: center; flex: none; position: relative; box-sizing: border-box; }
  .tk.active { background: #464646; }
  .tk.run::after { content: ""; position: absolute; left: 5px; right: 4px; bottom: 0; height: 2px; background: #76b9ed; }
  .yd { width: 24px; height: 34px; border-radius: 4px; background: #e8141c; color: #fff; font-size: 10.500px; font-weight: 700; line-height: 12px; display: flex; align-items: center; justify-content: center; text-align: center; }
  .mini { font: 700 9px "Liberation Sans", sans-serif; fill: #fff; }
  .tray { margin-left: auto; display: flex; align-items: center; padding-right: 9px; color: #eee; }
  .kj { font-size: 12px; color: #bdbdbd; width: 30px; }
  .kjm { align-self: flex-start; font: 14px/18px "Liberation Sans", sans-serif; color: #fff; width: 15px; }
  .ti { width: 16px; height: 16px; margin: 0 4px; flex: none; }
  .zh { font-size: 13px; width: 24px; text-align: center; margin: 0 0 0 2px; color: #eee; }
  .clock { display: flex; flex-direction: column; align-items: flex-end; font: 12.500px/19px "Liberation Sans", "Noto Sans CJK SC", sans-serif; width: 67px; white-space: nowrap; }
  .clock span:first-child { margin-right: 8px; }
  .watermark { position: absolute; left: 1689px; top: 12px; font: 15.500px "Liberation Sans", sans-serif; color: rgba(255,255,255,.42); white-space: nowrap; pointer-events: none; }

  .notes { position: absolute; inset: 0; pointer-events: none; z-index: 2; }
  .notes svg { display: block; filter: drop-shadow(2px 2px 2px rgba(0,0,0,.35)); }
  .nt { position: absolute; color: #f00; font: 700 18px/22px "Noto Sans CJK SC", sans-serif; letter-spacing: 2px; white-space: nowrap; }
  .n1 { left: 305px; top: 166px; }
  .n2 { left: 1612px; top: 144px; font-weight: 400; }
  .n3 { left: 1736px; top: 155px; }
  .n4 { left: 1791px; top: 221px; }
</style>
